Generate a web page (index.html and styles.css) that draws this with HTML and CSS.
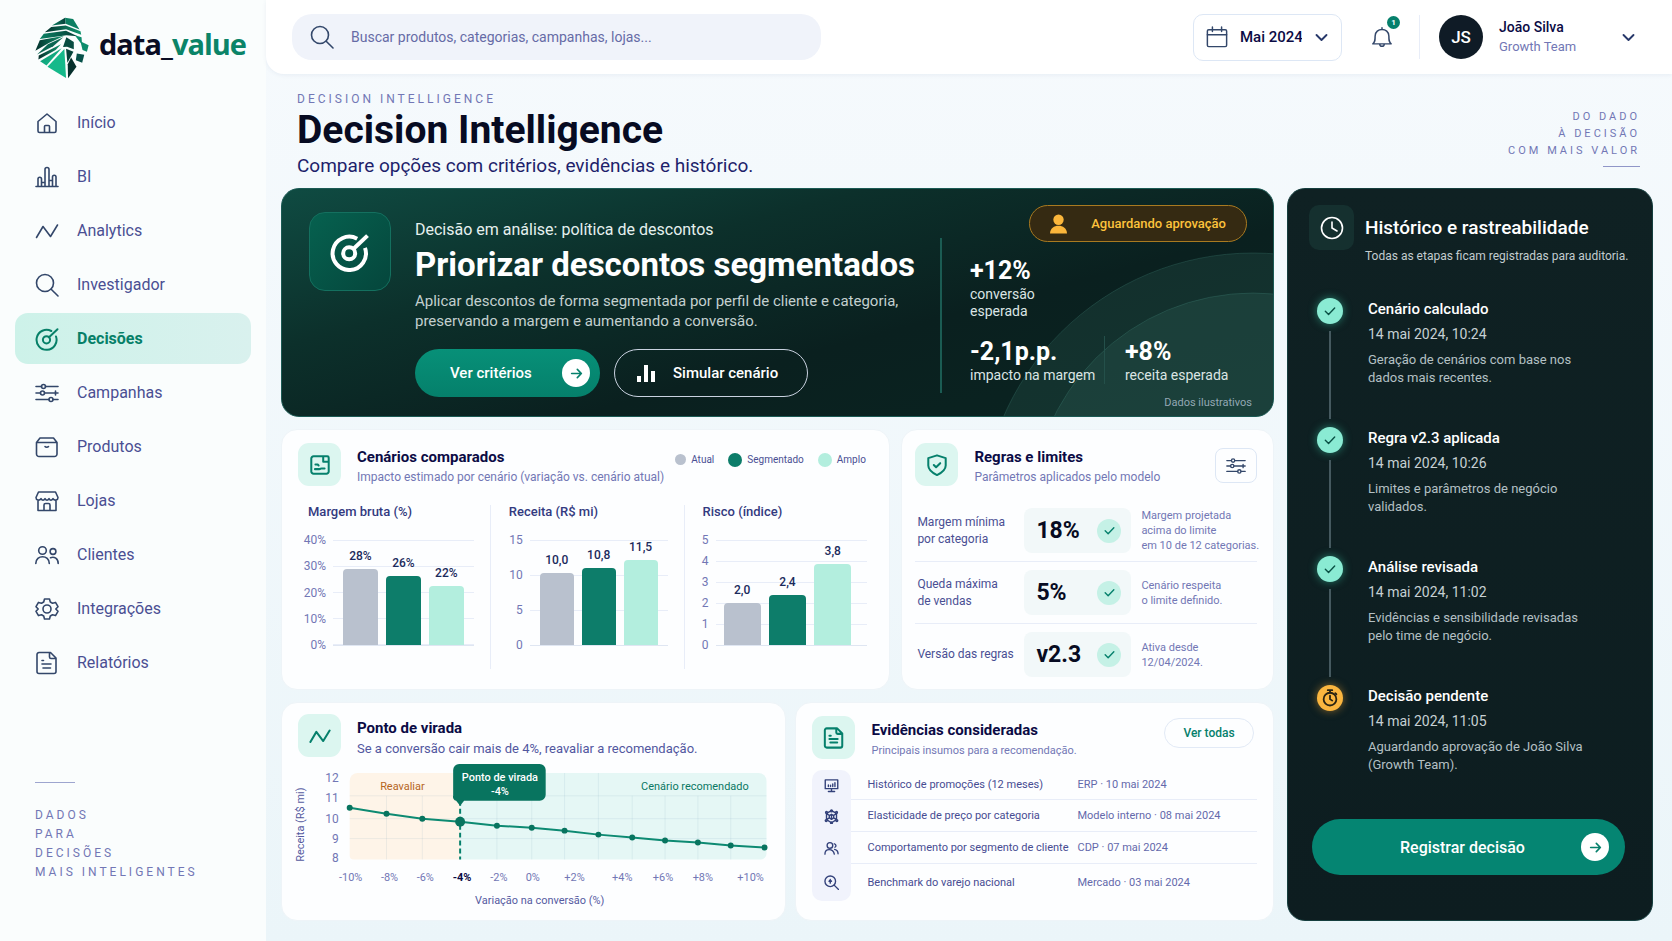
FILE: index.html
```html
<!DOCTYPE html>
<html lang="pt-BR">
<head>
  <meta charset="utf-8">
  <meta name="viewport" content="width=device-width, initial-scale=1">
  <title>data_value - Decision Intelligence</title>
  <link rel="stylesheet" href="styles.css">
</head>
<body>
  <!-- icons -->
  <svg class="sprite" aria-hidden="true">
    <symbol id="i-home" viewBox="0 0 24 24"><path d="M3 10.500 12 3l9 7.500V20a1.500 1.500 0 0 1-1.500 1.500h-15A1.500 1.500 0 0 1 3 20z"/><path d="M9.500 21v-5.500a1 1 0 0 1 1-1h3a1 1 0 0 1 1 1V21"/></symbol>
    <symbol id="i-bi" viewBox="0 0 24 24"><path d="M1 21.500h22M3 21.500V14a1.500 1.500 0 0 1 3.500 0v7.500M10 21.500V4.500a2 2 0 0 1 4 0v17M17.500 21.500V12a1.500 1.500 0 0 1 3.500 0v9.500M6.500 17.500h3.500M14 15.500h3.500"/></symbol>
    <symbol id="i-line" viewBox="0 0 24 24"><path d="M1.500 18.500 8 7.500l7.500 10L22.500 6"/></symbol>
    <symbol id="i-search" viewBox="0 0 24 24"><circle cx="10" cy="10" r="8.500"/><path d="m16.200 16.200 6.800 6.800"/></symbol>
    <symbol id="i-target" viewBox="0 0 24 24"><path d="M16.300 4A10 10 0 1 0 21 9.500"/><circle cx="11.500" cy="12.800" r="3.600"/><path d="m14 10.200 8.500-8"/></symbol>
    <symbol id="i-sliders" viewBox="0 0 24 24"><path d="M1 5.500h5.500M10.500 5.500H23M1 12h4.500M9.500 12h9.500M1 18.500h13M18 18.500h5M20.500 10v4M19 12h4"/><circle cx="8.500" cy="5.500" r="2"/><circle cx="7.500" cy="12" r="2"/><circle cx="16" cy="18.500" r="2"/></symbol>
    <symbol id="i-box" viewBox="0 0 24 24"><path d="M1.500 7.500 5 3h13.500L22 7.500V19a2.500 2.500 0 0 1-2.500 2.500H4A2.500 2.500 0 0 1 1.500 19zM1.500 7.500H22M10 11.500c.8 1 2.700 1 3.500 0"/></symbol>
    <symbol id="i-store" viewBox="0 0 24 24"><path d="M3.500 3h17L23 8.500c0 3-3.500 3.500-5 1.200-1.200 2-3 2-4 0-1 2-3 2-4 0-1 2-3 2-4 0-1.500 2.300-5 1.800-5-1.200zM3 11.500V21.500h18V11.500M9 21.500V16a1.500 1.500 0 0 1 1.500-1.500h3A1.500 1.500 0 0 1 15 16v5.500"/></symbol>
    <symbol id="i-users" viewBox="0 0 24 24"><circle cx="7.500" cy="7.500" r="3.800"/><circle cx="18" cy="8.500" r="2.900"/><path d="M.8 20.500c0-9 13.500-9 13.500 0M15.500 14.700c3.800-1.500 7.700.8 7.700 5.800"/></symbol>
    <symbol id="i-user-pair" viewBox="0 0 24 24"><circle cx="9.500" cy="7" r="4.500"/><path d="M1.500 21c0-9.500 13-9.500 15 0M16.500 4.500c3 .5 3.500 4 1 5.500M17 13.500c3.500 1 5.500 4 5.500 7"/></symbol>
    <symbol id="i-gear" viewBox="0 0 24 24"><circle cx="12" cy="12" r="4"/><path d="M9.500 2h5l.8 3 2.200 1.200 3-.8L23 9.700 20.800 12l2.200 2.300-2.500 4.300-3-.8-2.200 1.200-.8 3h-5l-.8-3-2.200-1.200-3 .8L1 14.300 3.200 12 1 9.700l2.500-4.300 3 .8L8.700 5z"/></symbol>
    <symbol id="i-doc" viewBox="0 0 24 24"><path d="M4 1.500h11.500L21 7v13.500a2 2 0 0 1-2 2H4a2 2 0 0 1-2-2v-17a2 2 0 0 1 2-2zM14.500 1.800V6a1.500 1.500 0 0 0 1.500 1.500h4.500M7 13h9M8 17h7.500M7 9.500h1.500"/></symbol>
    <symbol id="i-calendar" viewBox="0 0 24 24"><rect x="1.500" y="4" width="21" height="18.500" rx="1.500"/><path d="M1.500 9.500h21M7 1v5M17 1v5"/></symbol>
    <symbol id="i-bell" viewBox="0 0 24 24"><path d="M2 19.500c2.500-2 2.500-4 2.500-8.500 0-9.500 15-9.500 15 0 0 4.500 0 6.500 2.500 8.500zM9.500 19.500c0 3.500 5 3.500 5 0M12 3.800V2"/></symbol>
    <symbol id="i-chevron" viewBox="0 0 24 24"><path d="m4 8 8 8 8-8"/></symbol>
    <symbol id="i-arrow" viewBox="0 0 24 24"><path d="M3 12h18M13.500 4.500 21 12l-7.500 7.500"/></symbol>
    <symbol id="i-check" viewBox="0 0 24 24"><path d="m4 12.500 5.500 5.500L20 7"/></symbol>
    <symbol id="i-shield" viewBox="0 0 24 24"><path d="M12 1.500 21.500 4.500v8c0 5-4.500 8-9.500 10.500-5-2.500-9.500-5.500-9.500-10.500v-8z"/><path d="m8.500 12 2.500 2.500 4.500-4.500"/></symbol>
    <symbol id="i-scenario" viewBox="0 0 24 24"><path d="M20 2.500H5A2.500 2.500 0 0 0 2.500 5v14A2.500 2.500 0 0 0 5 21.500h14a2.500 2.500 0 0 0 2.500-2.500V4A1.500 1.500 0 0 0 20 2.500zM15.500 3v5.500h6M7 11.500h2.500l1 1M6.500 16.500h4.500c2 0 1.500-.8 3-.8h3"/></symbol>
    <symbol id="i-clock" viewBox="0 0 24 24"><circle cx="12" cy="12" r="10.500"/><path d="M12 6v6l5 3"/></symbol>
    <symbol id="i-timer" viewBox="0 0 24 24"><circle cx="12" cy="13.500" r="8.500"/><path d="M12 9v4.500l3 2M9 1.500h6M12 1.500V5M19 5.500l1.500 1.500"/></symbol>
    <symbol id="i-monitor" viewBox="0 0 24 24"><path d="M2 3h20v14H2zM12 17v4M7 21.500h10M7 13.500V11M10.500 13.500v-2M14 13.500V9.500M17.500 13.500V7.500"/></symbol>
    <symbol id="i-model" viewBox="0 0 24 24"><path d="M12 2.500 20 7v10l-8 5-8-5V7zM12 8.500l3.500 2v3.800L12 16.500l-3.500-2.200v-3.800zM12 8.500v8M4 7l4.500 3.500M20 7l-4.500 3.500M4 17l4.500-2.700M20 17l-4.500-2.700"/><circle cx="12" cy="3" r="1.500"/><circle cx="4" cy="5.500" r="1.500"/><circle cx="20" cy="5.500" r="1.500"/><circle cx="3.500" cy="18.500" r="1.500"/><circle cx="20.500" cy="18.500" r="1.500"/><circle cx="12" cy="22" r="1.500"/></symbol>
    <symbol id="i-zoom" viewBox="0 0 24 24"><circle cx="10" cy="10" r="8.500"/><path d="m16.200 16.200 7 7M10 7v6M8 10h4M9 8.500h2"/></symbol>
  </svg>

  <div class="app">
    <aside class="sidebar">
      <a class="brand" href="#" aria-label="data_value">
        <svg class="brand-mark" viewBox="104 52 160 184" aria-hidden="true">
          <defs>
            <linearGradient id="lg-a" x1="0" x2="1"><stop offset="0" stop-color="#04302c"/><stop offset="1" stop-color="#11966f"/></linearGradient>
            <linearGradient id="lg-b" x1="0" x2="1"><stop offset="0" stop-color="#0b8264"/><stop offset="1" stop-color="#063e37"/></linearGradient>
            <linearGradient id="lg-c" x1="0" x2="1" y1="0" y2="1"><stop offset="0" stop-color="#0b8a6a"/><stop offset="1" stop-color="#18c794"/></linearGradient>
          </defs>
          <path fill="url(#lg-b)" d="m154 77 39-23 2 18z"/>
          <path fill="#0c7f62" d="m193 54 24 4 19 31-41-17z"/>
          <path fill="url(#lg-a)" d="m133 97 19-15 43-5 44 17 2 11-45-17z"/>
          <path fill="url(#lg-b)" d="m118 117 12-15 66-9 34 16-33-3z"/>
          <path fill="url(#lg-a)" d="m105 152 13-31 73-13-46 21z"/>
          <path fill="#0a6652" d="m110 163 32-30 46-21-30 27z"/>
          <path fill="url(#lg-a)" d="m114 178 1-12 66-33-16 17z"/>
          <path fill="#084c41" d="m197 112 22 14v22l-20-8-12 1z"/>
          <path fill="url(#lg-c)" d="m119 183 64-38-45 51z"/>
          <path fill="#15b98a" d="m141 200 50-53 5 86z"/>
          <path fill="#06433a" d="m196 146 22 9-18 33z"/>
          <path fill="#06302c" d="m201 192 10-20 16 28-25 34z"/>
          <path fill="#0d8c6c" d="m222 106 20 6 1 14 20 10-5 19-13-5-5-20z"/>
          <path fill="#07514a" d="m228 160 22 4-6 24-19-8z"/>
        </svg>
        <span class="brand-name">data_<span>value</span></span>
      </a>
      <nav class="nav" aria-label="Principal">
        <a href="#"><svg class="icon"><use href="#i-home"/></svg>Início</a>
        <a href="#"><svg class="icon"><use href="#i-bi"/></svg>BI</a>
        <a href="#"><svg class="icon"><use href="#i-line"/></svg>Analytics</a>
        <a href="#"><svg class="icon"><use href="#i-search"/></svg>Investigador</a>
        <a href="#" class="active" aria-current="page"><svg class="icon"><use href="#i-target"/></svg>Decisões</a>
        <a href="#"><svg class="icon"><use href="#i-sliders"/></svg>Campanhas</a>
        <a href="#"><svg class="icon"><use href="#i-box"/></svg>Produtos</a>
        <a href="#"><svg class="icon"><use href="#i-store"/></svg>Lojas</a>
        <a href="#"><svg class="icon"><use href="#i-users"/></svg>Clientes</a>
        <a href="#"><svg class="icon"><use href="#i-gear"/></svg>Integrações</a>
        <a href="#"><svg class="icon"><use href="#i-doc"/></svg>Relatórios</a>
      </nav>
      <p class="motto">Dados<br>para<br>decisões<br>mais inteligentes</p>
    </aside>

    <div class="page">
      <header class="topbar">
        <label class="search">
          <svg class="icon"><use href="#i-search"/></svg>
          <input type="search" placeholder="Buscar produtos, categorias, campanhas, lojas..." aria-label="Buscar">
        </label>
        <div class="period">
          <svg class="icon"><use href="#i-calendar"/></svg>
          <select aria-label="Período"><option>Mai 2024</option><option>Abr 2024</option></select>
          <svg class="icon chevron"><use href="#i-chevron"/></svg>
        </div>
        <button class="bell" type="button" aria-label="Notificações">
          <svg class="icon"><use href="#i-bell"/></svg>
          <span class="bell-count">1</span>
        </button>
        <button class="user" type="button">
          <span class="avatar">JS</span>
          <span class="user-text"><span class="user-name">João Silva</span><span class="user-team">Growth Team</span></span>
          <svg class="icon chevron"><use href="#i-chevron"/></svg>
        </button>
      </header>

      <div class="page-head">
        <div>
          <p class="eyebrow">Decision Intelligence</p>
          <h1>Decision Intelligence</h1>
          <p class="lead">Compare opções com critérios, evidências e histórico.</p>
        </div>
        <p class="tagline">Do dado<br>à decisão<br>com mais valor</p>
      </div>

      <main class="layout">
        <div class="column">
          <section class="hero">
            <svg class="hero-arcs" viewBox="0 0 300 228" aria-hidden="true">
              <circle cx="280" cy="337" r="272"/>
              <circle cx="280" cy="327" r="222"/>
            </svg>
            <div class="hero-icon"><svg class="icon"><use href="#i-target"/></svg></div>
            <div class="hero-body">
              <p class="hero-kicker">Decisão em análise: política de descontos</p>
              <h2>Priorizar descontos segmentados</h2>
              <p class="hero-text">Aplicar descontos de forma segmentada por perfil de cliente e categoria,<br>preservando a margem e aumentando a conversão.</p>
              <div class="hero-actions">
                <button class="btn-primary" type="button"><span>Ver critérios</span><span class="dot"><svg class="icon"><use href="#i-arrow"/></svg></span></button>
                <button class="btn-outline" type="button">
                  <svg class="mini-bars" viewBox="0 0 18 18"><path d="M0 12h4v6H0zM7 1h4v17H7zM14 7h4v11h-4z"/></svg>
                  Simular cenário
                </button>
              </div>
            </div>
            <div class="hero-side">
              <p class="badge">
                <svg viewBox="0 0 18 20"><circle cx="9" cy="5.500" r="5.500"/><path d="M0 20c0-11 18-11 18 0z"/></svg>
                Aguardando aprovação
              </p>
              <div class="metrics">
                <p class="metric wide"><strong>+12%</strong><span>conversão<br>esperada</span></p>
                <p class="metric"><strong>-2,1p.p.</strong><span>impacto na margem</span></p>
                <p class="metric split"><strong>+8%</strong><span>receita esperada</span></p>
              </div>
              <p class="note">Dados ilustrativos</p>
            </div>
          </section>

          <div class="row row-a">
            <section class="card">
              <div class="card-head">
                <span class="tile"><svg class="icon"><use href="#i-scenario"/></svg></span>
                <div>
                  <h3>Cenários comparados</h3>
                  <p>Impacto estimado por cenário (variação vs. cenário atual)</p>
                </div>
                <ul class="legend">
                  <li class="atual">Atual</li>
                  <li class="seg">Segmentado</li>
                  <li class="amplo">Amplo</li>
                </ul>
              </div>
              <div class="charts">
                <figure class="chart">
                  <figcaption>Margem bruta (%)</figcaption>
                  <div class="chart-body">
                    <div class="axis"><span>40%</span><span>30%</span><span>20%</span><span>10%</span><span>0%</span></div>
                    <div class="plot steps-4">
                      <div class="bar atual" style="height: 72%"><b>28%</b></div>
                      <div class="bar seg" style="height: 66%"><b>26%</b></div>
                      <div class="bar amplo" style="height: 56%"><b>22%</b></div>
                    </div>
                  </div>
                </figure>
                <figure class="chart">
                  <figcaption>Receita (R$ mi)</figcaption>
                  <div class="chart-body">
                    <div class="axis"><span>15</span><span>10</span><span>5</span><span>0</span></div>
                    <div class="plot steps-3">
                      <div class="bar atual" style="height: 69%"><b>10,0</b></div>
                      <div class="bar seg" style="height: 73%"><b>10,8</b></div>
                      <div class="bar amplo" style="height: 81%"><b>11,5</b></div>
                    </div>
                  </div>
                </figure>
                <figure class="chart">
                  <figcaption>Risco (índice)</figcaption>
                  <div class="chart-body">
                    <div class="axis"><span>5</span><span>4</span><span>3</span><span>2</span><span>1</span><span>0</span></div>
                    <div class="plot steps-5">
                      <div class="bar atual" style="height: 40%"><b>2,0</b></div>
                      <div class="bar seg" style="height: 48%"><b>2,4</b></div>
                      <div class="bar amplo" style="height: 77%"><b>3,8</b></div>
                    </div>
                  </div>
                </figure>
              </div>
            </section>

            <section class="card rules-card">
              <div class="card-head">
                <span class="tile"><svg class="icon"><use href="#i-shield"/></svg></span>
                <div>
                  <h3>Regras e limites</h3>
                  <p>Parâmetros aplicados pelo modelo</p>
                </div>
                <button class="btn-square" type="button" aria-label="Ajustar regras"><svg class="icon"><use href="#i-sliders"/></svg></button>
              </div>
              <ul class="rules">
                <li>
                  <span>Margem mínima<br>por categoria</span>
                  <span class="rule-value">18%<i><svg class="icon"><use href="#i-check"/></svg></i></span>
                  <small>Margem projetada<br>acima do limite<br>em 10 de 12 categorias.</small>
                </li>
                <li>
                  <span>Queda máxima<br>de vendas</span>
                  <span class="rule-value">5%<i><svg class="icon"><use href="#i-check"/></svg></i></span>
                  <small>Cenário respeita<br>o limite definido.</small>
                </li>
                <li>
                  <span>Versão das regras</span>
                  <span class="rule-value">v2.3<i><svg class="icon"><use href="#i-check"/></svg></i></span>
                  <small>Ativa desde<br>12/04/2024.</small>
                </li>
              </ul>
            </section>
          </div>

          <div class="row row-b">
            <section class="card">
              <div class="card-head">
                <span class="tile"><svg class="icon bold"><use href="#i-line"/></svg></span>
                <div>
                  <h3>Ponto de virada</h3>
                  <p class="strong">Se a conversão cair mais de 4%, reavaliar a recomendação.</p>
                </div>
              </div>
              <svg class="line-chart" viewBox="0 0 490 148" role="img" aria-label="Receita por variação na conversão">
                <path class="zone-warn" d="M68 12h103v87H64a4 4 0 0 1-4-4V20a8 8 0 0 1 8-8z"/>
                <path class="zone-ok" d="M171 12h300a8 8 0 0 1 8 8v73a6 6 0 0 1-6 6H171z"/>
                <path class="grid" d="M60 35h419M60 58h419M60 78h419M97 35v64M133 35v64M208 35v64M243 35v64M276 12v87M310 12v87M344 35v64M377 35v64M410 35v64M443 35v64"/>
                <g class="y-labels">
                  <text x="49" y="21">12</text><text x="49" y="41">11</text><text x="49" y="62">10</text><text x="49" y="82">9</text><text x="49" y="102">8</text>
                </g>
                <text class="axis-title" transform="translate(14 64) rotate(-90)">Receita (R$ mi)</text>
                <text class="warn" x="113" y="29">Reavaliar</text>
                <text class="ok" x="407" y="29">Cenário recomendado</text>
                <path class="limit" d="M171 40v59"/>
                <path class="series" d="M60 47 97 53 133 58 171 61 208 65 243 67 276 70 310 74 344 77 377 80 410 82 443 85 477 87"/>
                <g class="points">
                  <circle cx="60" cy="47" r="3"/><circle cx="97" cy="53" r="3"/><circle cx="133" cy="58" r="3"/><circle cx="171" cy="61" r="5"/><circle cx="208" cy="65" r="3"/><circle cx="243" cy="67" r="3"/><circle cx="276" cy="70" r="3"/><circle cx="310" cy="74" r="3"/><circle cx="344" cy="77" r="3"/><circle cx="377" cy="80" r="3"/><circle cx="410" cy="82" r="3"/><circle cx="443" cy="85" r="3"/><circle cx="477" cy="87" r="3"/>
                </g>
                <path class="tip" d="M170 3h81a6 6 0 0 1 6 6v25a6 6 0 0 1-6 6h-76l-4 5-4-5a4 4 0 0 1-3-5V9a6 6 0 0 1 6-6z"/>
                <g class="tip-text"><text x="211" y="20">Ponto de virada</text><text x="211" y="34">-4%</text></g>
                <g class="x-labels">
                  <text x="61" y="121">-10%</text><text x="100" y="121">-8%</text><text x="136" y="121">-6%</text><text class="current" x="173" y="121">-4%</text><text x="210" y="121">-2%</text><text x="244" y="121">0%</text><text x="286" y="121">+2%</text><text x="334" y="121">+4%</text><text x="375" y="121">+6%</text><text x="415" y="121">+8%</text><text x="463" y="121">+10%</text>
                </g>
                <text class="axis-title" x="251" y="144">Variação na conversão (%)</text>
              </svg>
            </section>

            <section class="card evidence-card">
              <div class="card-head">
                <span class="tile"><svg class="icon bold"><use href="#i-doc"/></svg></span>
                <div>
                  <h3>Evidências consideradas</h3>
                  <p>Principais insumos para a recomendação.</p>
                </div>
                <button class="btn-pill" type="button">Ver todas</button>
              </div>
              <table class="evidence">
                <tbody>
                  <tr><td><svg class="icon"><use href="#i-monitor"/></svg></td><td>Histórico de promoções (12 meses)</td><td>ERP · 10 mai 2024</td></tr>
                  <tr><td><svg class="icon"><use href="#i-model"/></svg></td><td>Elasticidade de preço por categoria</td><td>Modelo interno · 08 mai 2024</td></tr>
                  <tr><td><svg class="icon"><use href="#i-user-pair"/></svg></td><td>Comportamento por segmento de cliente</td><td>CDP · 07 mai 2024</td></tr>
                  <tr><td><svg class="icon"><use href="#i-zoom"/></svg></td><td>Benchmark do varejo nacional</td><td>Mercado · 03 mai 2024</td></tr>
                </tbody>
              </table>
            </section>
          </div>
        </div>

        <aside class="history">
          <div class="history-head">
            <span class="history-icon"><svg class="icon"><use href="#i-clock"/></svg></span>
            <div>
              <h2>Histórico e rastreabilidade</h2>
              <p>Todas as etapas ficam registradas para auditoria.</p>
            </div>
          </div>
          <ol class="timeline">
            <li>
              <span class="step"><svg class="icon"><use href="#i-check"/></svg></span>
              <div><h3>Cenário calculado</h3><time>14 mai 2024, 10:24</time><p>Geração de cenários com base nos<br>dados mais recentes.</p></div>
            </li>
            <li>
              <span class="step"><svg class="icon"><use href="#i-check"/></svg></span>
              <div><h3>Regra v2.3 aplicada</h3><time>14 mai 2024, 10:26</time><p>Limites e parâmetros de negócio<br>validados.</p></div>
            </li>
            <li>
              <span class="step"><svg class="icon"><use href="#i-check"/></svg></span>
              <div><h3>Análise revisada</h3><time>14 mai 2024, 11:02</time><p>Evidências e sensibilidade revisadas<br>pelo time de negócio.</p></div>
            </li>
            <li>
              <span class="step pending"><svg class="icon"><use href="#i-timer"/></svg></span>
              <div><h3>Decisão pendente</h3><time>14 mai 2024, 11:05</time><p>Aguardando aprovação de João Silva<br>(Growth Team).</p></div>
            </li>
          </ol>
          <button class="btn-primary large" type="button"><span>Registrar decisão</span><span class="dot"><svg class="icon"><use href="#i-arrow"/></svg></span></button>
        </aside>
      </main>
    </div>
  </div>
</body>
</html>
```

FILE: styles.css
```css
:root {
  --green: #06806c;
  --mint: #b3eede;
  --grey: #b9c1ce;
  --navy: #0b0b45;
  --text: #4a4f93;
  --muted: #7277b5;
  --line: #e8edf8;
}

* {
  box-sizing: border-box;
}

body {
  margin: 0;
  font-family: Roboto, "Liberation Sans", sans-serif;
  color: var(--text);
  background: linear-gradient(180deg, #f6fafd, #ebf5f9);
}

h1, h2, h3, p, ul, ol, figure {
  margin: 0;
  padding: 0;
}

ul, ol {
  list-style: none;
}

a {
  color: inherit;
  text-decoration: none;
}

button, input, select {
  font: inherit;
  color: inherit;
  background: none;
  border: 0;
  padding: 0;
}

button {
  cursor: pointer;
}

.sprite {
  display: none;
}

.icon {
  width: 24px;
  height: 24px;
  flex: none;
  fill: none;
  stroke: currentColor;
  stroke-width: 1.6;
  stroke-linecap: round;
  stroke-linejoin: round;
}

.icon.bold {
  stroke-width: 2.2;
}

.app {
  display: grid;
  grid-template-columns: 266px minmax(0, 1fr);
  min-height: 100vh;
}

/* sidebar */
.sidebar {
  display: flex;
  flex-direction: column;
  padding: 17px 15px 61px;
  background: #fafdfd;
}

.brand {
  display: flex;
  align-items: flex-start;
  gap: 10px;
  padding-left: 20px;
}

.brand-mark {
  width: 54px;
  height: 62px;
}

.brand-name {
  font-family: "Open Sans", "Noto Sans", sans-serif;
  font-size: 29px;
  font-weight: 700;
  letter-spacing: -1px;
  line-height: 54px;
  color: #0a0d24;
}

.brand-name span {
  color: #0b8468;
}

.nav {
  display: flex;
  flex-direction: column;
  gap: 3px;
  margin-top: 18px;
}

.nav a {
  display: flex;
  align-items: center;
  gap: 18px;
  height: 51px;
  padding: 0 20px;
  border-radius: 13px;
  font-size: 16px;
}

.nav .icon {
  color: #33476a;
}

.nav .active {
  background: linear-gradient(90deg, #cdf2e9, #d9f1ee);
  color: #078068;
  font-weight: 700;
}

.nav .active .icon {
  color: #078068;
  stroke-width: 2;
}

.motto,
.tagline,
.eyebrow {
  text-transform: uppercase;
  color: var(--muted);
}

.motto {
  margin-top: auto;
  padding-left: 20px;
  font-size: 12px;
  letter-spacing: 3px;
  line-height: 19px;
}

.motto::before {
  content: "";
  display: block;
  width: 40px;
  height: 1px;
  margin-bottom: 23px;
  background: #9da5cf;
}

/* top bar */
.page {
  display: flex;
  flex-direction: column;
}

.topbar {
  display: flex;
  align-items: center;
  height: 74px;
  padding: 0 36px 0 26px;
  background: #fff;
  border-bottom-left-radius: 18px;
  box-shadow: 0 1px 4px rgba(60, 90, 140, .08);
}

.search {
  display: flex;
  align-items: center;
  gap: 17px;
  flex: 0 1 529px;
  height: 46px;
  margin-right: auto;
  padding: 0 18px;
  border-radius: 20px;
  background: #f0f3fa;
  color: #33476a;
}

.search input {
  flex: 1;
  min-width: 0;
  font-size: 14px;
  outline: 0;
}

.search input::placeholder {
  color: #666ba6;
}

.period {
  display: flex;
  align-items: center;
  gap: 12px;
  height: 47px;
  padding: 0 12px;
  border: 1px solid #dde7f5;
  border-radius: 10px;
  color: #33476a;
}

.period .icon {
  width: 22px;
  height: 22px;
}

.period select {
  appearance: none;
  width: 62px;
  font-size: 15px;
  font-weight: 500;
  color: var(--navy);
}

.period .chevron,
.user .chevron {
  width: 15px;
  height: 15px;
  stroke-width: 3;
  color: #27386a;
}

.bell {
  position: relative;
  display: flex;
  width: 22px;
  margin-left: 29px;
  color: #33476a;
}

.bell .icon {
  width: 22px;
  height: 22px;
}

.bell-count {
  position: absolute;
  top: -10px;
  right: -7px;
  width: 13px;
  height: 13px;
  border-radius: 50%;
  background: var(--green);
  color: #fff;
  font-size: 8px;
  font-weight: 700;
  line-height: 13px;
}

.user {
  display: flex;
  align-items: center;
  gap: 16px;
  margin-left: 26px;
  padding-left: 19px;
  border-left: 1px solid var(--line);
  text-align: left;
}

.avatar {
  width: 44px;
  height: 44px;
  border-radius: 50%;
  background: #0f1b26;
  color: #fff;
  font-size: 17px;
  font-weight: 500;
  line-height: 44px;
  text-align: center;
}

.user-text {
  width: 106px;
}

.user-name,
.user-team {
  display: block;
  line-height: 19px;
}

.user-name {
  font-size: 14px;
  font-weight: 500;
  color: var(--navy);
}

.user-team {
  font-size: 13px;
  color: var(--muted);
}

/* page heading */
.page-head {
  display: flex;
  justify-content: space-between;
  padding: 17px 32px 0 31px;
}

.eyebrow {
  font-size: 12px;
  letter-spacing: 3px;
  line-height: 16px;
}

h1 {
  font-size: 39px;
  font-weight: 700;
  line-height: 46px;
  color: #070b22;
}

.lead {
  font-size: 19px;
  line-height: 26px;
  color: #1e1f6b;
}

.tagline {
  margin-top: 17px;
  font-size: 11px;
  letter-spacing: 3px;
  line-height: 17px;
  text-align: right;
}

.tagline::after {
  content: "";
  display: block;
  width: 37px;
  height: 1px;
  margin: 7px 0 0 auto;
  background: #9096c8;
}

.layout {
  display: grid;
  grid-template-columns: minmax(0, 1fr) 366px;
  gap: 13px;
  flex: 1;
  padding: 9px 19px 22px 15px;
}

.column {
  display: flex;
  flex-direction: column;
  gap: 12px;
}

/* decision hero */
.hero {
  position: relative;
  display: flex;
  overflow: hidden;
  min-height: 229px;
  padding: 0 26px 0 27px;
  border: 1px solid #1b5a54;
  border-radius: 18px;
  background: linear-gradient(165deg, #0f4b42 0, #0c302b 32%, #0a201f 62%, #0a2421 100%);
  color: #fff;
}

.hero-arcs {
  position: absolute;
  right: 0;
  bottom: 0;
  width: 300px;
  height: 228px;
  fill: rgba(80, 150, 135, .14);
  stroke: rgba(90, 170, 155, .2);
}

.hero-icon {
  display: grid;
  place-items: center;
  width: 82px;
  height: 79px;
  margin-top: 23px;
  border: 1px solid #14705f;
  border-radius: 16px;
  background: linear-gradient(135deg, #06614f, #05463c);
}

.hero-icon .icon {
  width: 40px;
  height: 40px;
  stroke-width: 2.4;
  stroke-linecap: butt;
}

.hero-body {
  margin: 29px 0 0 24px;
}

.hero-kicker {
  font-size: 16px;
  line-height: 24px;
  color: #e5f0ee;
}

.hero h2 {
  font-size: 33px;
  font-weight: 700;
  line-height: 46px;
}

.hero-text {
  margin-top: 3px;
  font-size: 15px;
  line-height: 20px;
  color: #c3d0cf;
}

.hero-actions {
  display: flex;
  gap: 14px;
  margin-top: 18px;
}

.btn-primary {
  display: flex;
  align-items: center;
  justify-content: space-between;
  width: 185px;
  height: 48px;
  padding: 0 10px 0 35px;
  border-radius: 24px;
  background: linear-gradient(180deg, #079078, #05806b);
  color: #fff;
  font-size: 15px;
  font-weight: 500;
}

.dot {
  display: grid;
  place-items: center;
  width: 28px;
  height: 28px;
  border-radius: 50%;
  background: #fff;
  color: var(--green);
}

.dot .icon {
  width: 13px;
  height: 13px;
  stroke-width: 3;
}

.btn-outline {
  display: flex;
  align-items: center;
  gap: 18px;
  width: 194px;
  height: 48px;
  padding: 0 22px;
  border: 1px solid #c9d2e0;
  border-radius: 24px;
  font-size: 15px;
  font-weight: 500;
}

.mini-bars {
  width: 18px;
  height: 18px;
  fill: #fff;
}

.hero-side {
  position: relative;
  flex: 1;
  display: flex;
  flex-direction: column;
  margin-left: auto;
  max-width: 307px;
  padding: 16px 0 0 30px;
}

/* divider between the text and the metrics */
.hero-side::before {
  content: "";
  position: absolute;
  left: 0;
  top: 49px;
  width: 2px;
  height: 155px;
  background: #1b5c53;
}

.badge {
  display: flex;
  align-items: center;
  align-self: flex-end;
  gap: 24px;
  height: 37px;
  padding: 0 20px;
  border: 1px solid #a97a20;
  border-radius: 19px;
  background: #352a12;
  color: #fcc23c;
  font-size: 13px;
  font-weight: 500;
}

.badge svg {
  width: 17px;
  height: 20px;
  fill: #fbb63b;
}

.metrics {
  display: grid;
  grid-template-columns: 134px 1fr;
  row-gap: 16px;
  margin-top: 13px;
}

.metric strong,
.metric span {
  display: block;
}

.metric strong {
  font-size: 25px;
  line-height: 31px;
}

.metric span {
  font-size: 14px;
  line-height: 17px;
  color: #dbe5e4;
}

.metric.wide {
  grid-column: 1 / -1;
}

.metric.split {
  padding-left: 20px;
  border-left: 1px solid #24504a;
}

.note {
  margin: 11px -5px 0 0;
  font-size: 11px;
  line-height: 16px;
  text-align: right;
  color: #93a8b4;
}

/* cards */
.row {
  display: grid;
  gap: 11px;
}

.row-a {
  grid-template-columns: minmax(0, 610fr) minmax(0, 373fr);
}

.row-b {
  flex: 1;
  gap: 9px;
  grid-template-columns: minmax(0, 506fr) minmax(0, 479fr);
}

.card {
  padding: 13px 16px 12px;
  border: 1px solid #eef4f8;
  border-radius: 16px;
  background: #fdfeff;
}

.card-head {
  display: flex;
  align-items: flex-start;
  gap: 16px;
}

.row-b .card-head {
  margin-top: -2px;
}

.tile {
  display: grid;
  place-items: center;
  flex: none;
  width: 43px;
  height: 43px;
  border-radius: 11px;
  background: #dcf6f0;
  color: var(--green);
}

.tile .icon {
  width: 22px;
  height: 22px;
  stroke-width: 2.2;
}

.card h3 {
  margin-top: 4px;
  font-size: 15px;
  font-weight: 700;
  line-height: 20px;
  color: var(--navy);
}

.card-head p {
  font-size: 12px;
  line-height: 21px;
  color: var(--muted);
  white-space: nowrap;
}

.card-head .strong {
  font-size: 13px;
  color: #5257a0;
}

.legend {
  display: flex;
  gap: 14px;
  margin: 9px 0 0 auto;
  font-size: 10px;
  line-height: 15px;
}

/* the legend sits higher than the subtitle, so it may come closer to it */
.card-head .legend {
  margin-left: -5px;
}

.legend li {
  display: flex;
  align-items: center;
  gap: 5px;
}

.legend li::before {
  content: "";
  width: 14px;
  height: 14px;
  border-radius: 50%;
}

.legend .atual::before {
  width: 11px;
  height: 11px;
}

.bar.atual, .legend .atual::before { background: var(--grey); }
.bar.seg, .legend .seg::before { background: #0d7d6a; }
.bar.amplo, .legend .amplo::before { background: var(--mint); }

.charts {
  display: grid;
  grid-template-columns: 192fr 194fr 190fr;
  margin-top: 17px;
}

.chart {
  height: 164px;
}

.chart + .chart {
  border-left: 1px solid var(--line);
}

.chart figcaption {
  padding-left: 10px;
  font-size: 13px;
  font-weight: 500;
  line-height: 14px;
  color: #333a80;
}

.chart + .chart figcaption {
  padding-left: 18px;
}

.chart-body {
  display: flex;
  gap: 7px;
  margin: 21px 16px 0 0;
}

.axis {
  display: flex;
  flex-direction: column;
  justify-content: space-between;
  width: 28px;
  height: 117px;
  margin-top: -6px;
  font-size: 12px;
  line-height: 12px;
  text-align: right;
  color: var(--muted);
}

.chart + .chart .axis {
  width: 32px;
}

.chart:last-child .axis {
  width: 24px;
}

.chart:last-child .chart-body {
  margin-right: 6px;
}

.plot {
  flex: 1;
  display: flex;
  align-items: flex-end;
  justify-content: space-between;
  gap: 8px;
  height: 106px;
  padding: 0 10px;
  border-bottom: 1px solid #dfe6f2;
  background-image: linear-gradient(var(--line) 1px, transparent 1px);
}

.chart:last-child .plot {
  padding: 0 16px 0 8px;
}

.steps-3 { background-size: 100% 35px; }
.steps-4 { background-size: 100% 26px; }
.steps-5 { background-size: 100% 21px; }

.bar {
  flex: 1;
  border-radius: 4px 4px 0 0;
  text-align: center;
}

.bar b {
  display: block;
  margin-top: -20px;
  font-size: 12px;
  font-weight: 500;
  line-height: 14px;
  color: #1b2a5c;
}

/* rules */
.rules-card {
  padding-left: 13px;
}

.btn-square {
  display: grid;
  place-items: center;
  width: 42px;
  height: 35px;
  margin: 5px 0 0 auto;
  border: 1px solid #dde7f5;
  border-radius: 8px;
  color: #33476a;
}

.btn-square .icon {
  width: 20px;
  height: 20px;
}

.rules {
  margin-top: 12px;
}

.rules li {
  display: grid;
  grid-template-columns: 97px 107px 1fr;
  gap: 10px;
  align-items: center;
  padding: 8px 0;
  padding-left: 2px;
  font-size: 12px;
  line-height: 17px;
  white-space: nowrap;
}

.rules li:last-child {
  padding-bottom: 0;
}

.rules li + li {
  border-top: 1px solid var(--line);
}

.rule-value {
  display: flex;
  align-items: center;
  justify-content: space-between;
  height: 45px;
  padding: 0 10px 0 12px;
  border-radius: 8px;
  background: #f2f8f9;
  color: #070b22;
  font-size: 23px;
  font-weight: 700;
}

.rule-value i {
  display: grid;
  place-items: center;
  width: 24px;
  height: 24px;
  border-radius: 50%;
  background: #c5f1e6;
  color: var(--green);
}

.rule-value .icon {
  width: 13px;
  height: 13px;
  stroke-width: 2.6;
}

.rules small {
  font-size: 11px;
  line-height: 15px;
  color: var(--muted);
}

/* turning point chart */
.line-chart {
  display: block;
  width: calc(100% + 16px);
  margin: 2px -8px 0;
  font-size: 12px;
}

.line-chart text {
  text-anchor: middle;
  fill: var(--muted);
}

.zone-warn { fill: #fef4e8; }
.zone-ok { fill: #e5f7f5; }

.grid {
  fill: none;
  stroke: #6d9bb0;
  stroke-opacity: .12;
}

.line-chart .y-labels text {
  text-anchor: end;
}

.line-chart .x-labels text,
.line-chart .axis-title,
.line-chart .warn,
.line-chart .ok {
  font-size: 11px;
}

.line-chart .axis-title {
  fill: #555a9f;
}

.line-chart .warn {
  fill: #b5651d;
}

.line-chart .ok {
  fill: #0a7763;
}

.line-chart .x-labels .current {
  font-weight: 700;
  fill: var(--navy);
}

.limit {
  stroke: var(--green);
  stroke-width: 2;
  stroke-dasharray: 5 3;
}

.series {
  fill: none;
  stroke: #0d8a72;
  stroke-width: 2;
}

.points,
.tip {
  fill: #08745f;
}

.line-chart .tip-text text {
  font-size: 11px;
  font-weight: 500;
  fill: #fff;
}

/* evidence */
.evidence-card .card-head {
  padding-top: 2px;
}

.evidence-card .card-head p {
  font-size: 11px;
}

.btn-pill {
  width: 90px;
  height: 30px;
  margin: 2px 3px 0 auto;
  border: 1px solid #e2eaf6;
  border-radius: 15px;
  color: var(--green);
  font-size: 12px;
  font-weight: 500;
}

.evidence {
  width: 100%;
  margin-top: 9px;
  border-collapse: separate;
  border-spacing: 0;
  font-size: 11px;
}

.evidence td {
  height: 32px;
  padding: 0;
  border-bottom: 1px solid var(--line);
  color: #6469ab;
}

.evidence td:first-child {
  width: 39px;
  border: 0;
  background: #f1f3fc;
  text-align: center;
  line-height: 0;
  color: #33417a;
}

.evidence td:nth-child(2) {
  width: 226px;
  padding-left: 16px;
  color: #474c92;
}

.evidence tr:first-child td { height: 30px; }
.evidence tr:last-child td { height: 37px; border: 0; }
.evidence tr:first-child td:first-child { border-radius: 10px 10px 0 0; }
.evidence tr:last-child td:first-child { border-radius: 0 0 10px 10px; }

.evidence .icon {
  width: 15px;
  height: 15px;
  stroke-width: 2.2;
}

/* history */
.history {
  display: flex;
  flex-direction: column;
  padding: 16px 21px 45px;
  border: 1px solid #153e3e;
  border-radius: 18px;
  background: linear-gradient(180deg, #0f2123, #0d1d20);
  color: #fff;
}

.history-head {
  display: flex;
  gap: 11px;
}

.history-icon {
  display: grid;
  place-items: center;
  flex: none;
  width: 45px;
  height: 45px;
  border-radius: 10px;
  background: #15302f;
}

.history h2 {
  margin-top: 10px;
  font-size: 19px;
  font-weight: 500;
  line-height: 26px;
}

.history-head p {
  font-size: 12px;
  line-height: 30px;
  color: #c2cccf;
  white-space: nowrap;
}

.timeline {
  margin-top: 27px;
}

.timeline li {
  position: relative;
  display: flex;
  gap: 25px;
  height: 129px;
  padding-left: 8px;
}

/* connector down to the next step */
.timeline li:not(:last-child)::before {
  content: "";
  position: absolute;
  left: 20px;
  top: 33px;
  width: 2px;
  height: 88px;
  background: #45595f;
}

.step {
  display: grid;
  place-items: center;
  flex: none;
  width: 26px;
  height: 26px;
  border-radius: 50%;
  background: #8aebd3;
  box-shadow: 0 0 8px rgba(60, 220, 180, .5);
  color: #0a5145;
}

.step .icon {
  width: 14px;
  height: 14px;
  stroke-width: 2.4;
}

.step.pending {
  background: #fbb63f;
  box-shadow: 0 0 8px rgba(250, 170, 50, .5);
  color: #2a2413;
}

.step.pending .icon {
  width: 18px;
  height: 18px;
}

.timeline h3 {
  font-size: 15px;
  font-weight: 500;
  line-height: 22px;
}

.timeline time {
  display: block;
  font-size: 14px;
  line-height: 28px;
  color: #c6d0d3;
}

.timeline p {
  margin-top: 3px;
  font-size: 13px;
  line-height: 18px;
  color: #b4c0c4;
}

.btn-primary.large {
  width: auto;
  height: 56px;
  margin: auto 6px 0 3px;
  padding: 0 16px 0 88px;
  border-radius: 28px;
  background: #058572;
  font-size: 16px;
}
```
